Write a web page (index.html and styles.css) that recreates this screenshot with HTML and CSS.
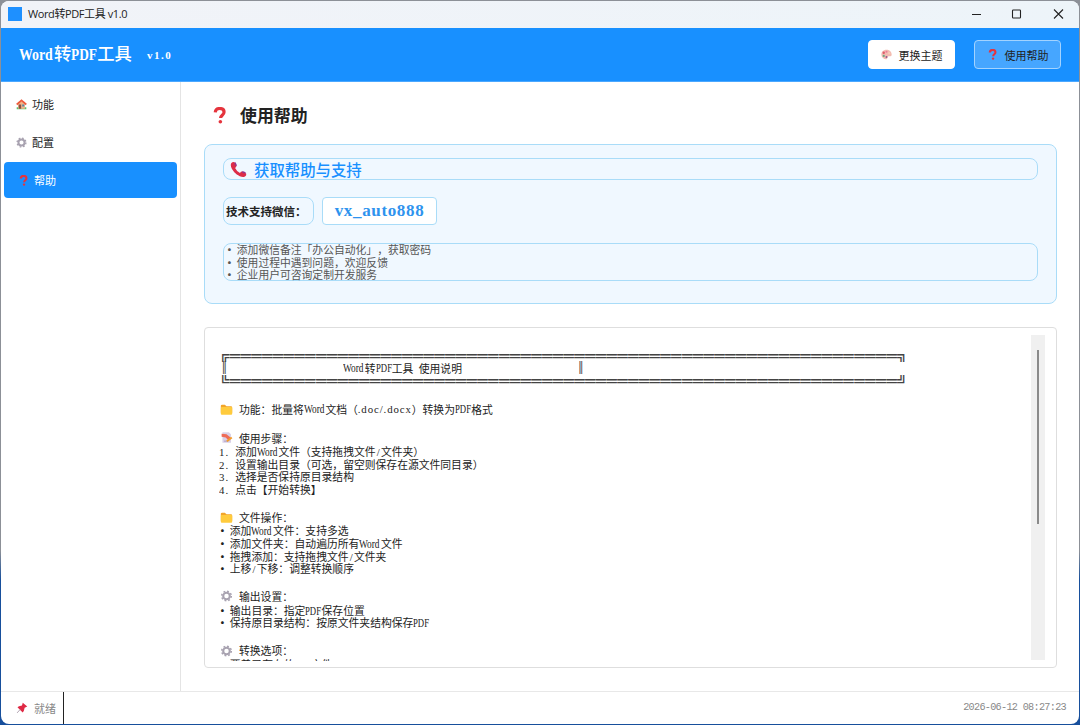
FILE: index.html
```html
<!DOCTYPE html>
<html lang="zh-CN">
<head>
<meta charset="utf-8">
<title>Word转PDF工具 v1.0</title>
<link rel="stylesheet" href="styles.css">
</head>
<body>
<svg class="defs" width="0" height="0">
  <symbol id="question" viewBox="0 0 16 16"><path d="M4 5.100C4.200 2.400 6 1.400 8.200 1.400c2.500 0 4.100 1.300 4.100 3.300 0 3-3.300 3-3.300 5.700" fill="none" stroke="#e5343d" stroke-width="3"/><circle cx="8.800" cy="13.900" r="1.700" fill="#e5343d"/></symbol>
  <symbol id="gear" viewBox="0 0 16 16"><circle cx="8" cy="8" r="6.400" fill="none" stroke="#a8a2b0" stroke-width="2" stroke-dasharray="2.513 2.513"/><circle cx="8" cy="8" r="4.400" fill="none" stroke="#a8a2b0" stroke-width="2.800"/></symbol>
  <symbol id="folder" viewBox="0 0 16 16"><path d="M1 3.500q0-1.500 1.500-1.500H6l2 2h5.500Q15 4 15 5.500V12H1z" fill="#f2a52a"/><rect x="1" y="5" width="14" height="9.500" rx="1.300" fill="#ffcb3d"/></symbol>
  <symbol id="memo" viewBox="0 0 16 16"><path d="M3 1.500h8l2.500 2.500v10.500H3z" fill="#d9d0e6"/><path d="M5 12.500h5" stroke="#a694bd"/><path d="M2 3.500l6 .5 5 4-3 3-3-3-5-1z" fill="#ef6c57"/><path d="M8.500 12.500l6-4.500" stroke="#f49b29" stroke-width="2.400"/></symbol>
  <symbol id="home" viewBox="0 0 16 16"><path d="M1 12h14v3H1z" fill="#59c26c"/><path d="M3 7l5-4 5 4v7H3z" fill="#f0b58a"/><path d="M1 8l7-6 7 6" fill="none" stroke="#ed5a3c" stroke-width="2.400"/><path d="M4 8h3.500v6H4z" fill="#8a4e3f"/><path d="M9 8h3v3H9z" fill="#5588a8"/></symbol>
  <symbol id="phone" viewBox="0 0 16 16"><path d="M2.200 1.100Q4.600.300 5.500 2.500l.6 2q.2 1-1.300 2 1.500 3.200 4.600 4.700 1.200-1.600 2.400-1.100l2.500 1q1.500.8.900 2.300c-1 2-3.400 2.100-6 .9C5.300 12.600 2.100 9 1 5.500.5 3.200.700 1.700 2.200 1.100z" fill="#dc2c48"/><path d="M4.600 1.500l1.300 3M11.500 10.200l3 1.200" stroke="#92368e" stroke-width="1.500"/></symbol>
  <symbol id="palette" viewBox="0 0 16 16"><path d="M8 1C3 1 .3 4.500.5 8.500.8 13 5 15.500 8 15c2-.4.500-3 2-4 2-1.300 5.500 1 5.500-3C15.500 3.500 12 1 8 1z" fill="#f2bbb0"/><circle cx="4" cy="5.500" r="1.700" fill="#e05a6c"/><circle cx="8" cy="4" r="1.500" fill="#ed7b9b"/><circle cx="12" cy="6" r="1.600" fill="#f8cdb8"/><circle cx="4" cy="10" r="1.600" fill="#69a884"/><circle cx="8" cy="11.500" r="1.500" fill="#94588e"/></symbol>
  <symbol id="pin" viewBox="0 0 16 16"><path d="M9 1l6 5-2 1-1.500.5-1 4L9 14 5.500 10.500 2 7l2-1.500 4-1z" fill="#df2945"/><path d="M5.500 10L1.500 14.500" stroke="#a99aa9" stroke-width="1.200"/></symbol>
</svg>
<div class="window">
  <div class="titlebar">
    <i class="app-icon"></i><span class="app-name">Word转PDF工具 v1.0</span>
    <svg class="controls" width="96" height="14" viewBox="0 0 96 14" fill="none" stroke="#222" stroke-width="1.100"><path d="M0 7.500h9"/><rect x="40.500" y="3" width="8" height="8" rx=".8"/><path d="M82 2.500l9 9m0-9l-9 9"/></svg>
  </div>
  <header class="header">
    <h1 class="brand"><span class="brand-word">Word</span>转<span class="brand-pdf">PDF</span>工具</h1><span class="version">v1.0</span>
    <button class="btn"><svg width="11" height="11"><use href="#palette"/></svg>更换主题</button>
    <button class="btn btn-active"><svg width="11" height="11"><use href="#question"/></svg>使用帮助</button>
  </header>
  <div class="body">
    <nav class="sidebar">
      <a class="nav"><svg width="11" height="11"><use href="#home"/></svg>功能</a>
      <a class="nav"><svg width="11" height="11"><use href="#gear"/></svg>配置</a>
      <a class="nav nav-active"><svg width="11" height="11"><use href="#question"/></svg>帮助</a>
    </nav>
    <main class="content">
      <h2 class="page-title"><svg width="17" height="17"><use href="#question"/></svg>使用帮助</h2>
      <section class="support">
        <h3 class="support-title"><svg width="17" height="17"><use href="#phone"/></svg>获取帮助与支持</h3>
        <div class="contact"><span class="contact-label">技术支持微信：</span><span class="contact-id">vx_auto888</span></div>
        <div class="notes"><p><b class="dot">·</b>添加微信备注「办公自动化」，获取密码</p><p><b class="dot">·</b>使用过程中遇到问题，欢迎反馈</p><p><b class="dot">·</b>企业用户可咨询定制开发服务</p></div>
      </section>
      <section class="guide">
        <div class="guide-text">
          <p class="rule">╔══════════════════════════════════════════════════════════════╗</p>
          <p class="banner"><span class="bar">║</span><span class="banner-title"><i class="w">Word</i>转<i class="p">PDF</i>工具<i class="sp"></i>使用说明</span><span class="bar">║</span></p>
          <p class="rule">╚══════════════════════════════════════════════════════════════╝</p>
          <p></p>
          <p class="head"><svg width="13" height="13"><use href="#folder"/></svg>功能：批量将<i class="w">Word</i>文档（<i class="n">.doc/.docx</i>）转换为<i class="p">PDF</i>格式</p>
          <p></p>
          <p class="head"><svg width="13" height="13"><use href="#memo"/></svg>使用步骤：</p>
          <p><i class="num">1.</i>添加<i class="w">Word</i>文件（支持拖拽文件<i class="s">/</i>文件夹）</p>
          <p><i class="num">2.</i>设置输出目录（可选，留空则保存在源文件同目录）</p>
          <p><i class="num">3.</i>选择是否保持原目录结构</p>
          <p><i class="num">4.</i>点击【开始转换】</p>
          <p></p>
          <p class="head"><svg width="13" height="13"><use href="#folder"/></svg>文件操作：</p>
          <p><b class="dot">·</b>添加<i class="w">Word</i>文件：支持多选</p>
          <p><b class="dot">·</b>添加文件夹：自动遍历所有<i class="w">Word</i>文件</p>
          <p><b class="dot">·</b>拖拽添加：支持拖拽文件<i class="s">/</i>文件夹</p>
          <p><b class="dot">·</b>上移<i class="s">/</i>下移：调整转换顺序</p>
          <p></p>
          <p class="head"><svg width="12" height="12"><use href="#gear"/></svg>输出设置：</p>
          <p><b class="dot">·</b>输出目录：指定<i class="p">PDF</i>保存位置</p>
          <p><b class="dot">·</b>保持原目录结构：按原文件夹结构保存<i class="p">PDF</i></p>
          <p></p>
          <p class="head"><svg width="12" height="12"><use href="#gear"/></svg>转换选项：</p>
          <p><b class="dot">·</b>覆盖已存在的<i class="p">PDF</i>文件</p>
        </div>
        <div class="scroll"><i class="thumb"></i></div>
      </section>
    </main>
  </div>
  <footer class="status"><span class="ready"><svg width="12" height="12"><use href="#pin"/></svg>就绪</span><time class="clock">2026-06-12 08:27:23</time></footer>
</div>
</body>
</html>
```
FILE: styles.css
```css
* { box-sizing: border-box; margin: 0; padding: 0; }
body { width: 1080px; height: 725px; overflow: hidden; padding: 1px; background: linear-gradient(#8c9097 0 76%, #174f9c 80%); font-family: "Liberation Sans", "Noto Sans CJK SC", sans-serif; color: #222; text-spacing-trim: space-all; }
svg { flex: none; }
i { font-style: normal; }
.defs { display: none; }
.window { height: 723px; display: flex; flex-direction: column; background: #fff; border-radius: 8px; overflow: hidden; }
.titlebar { flex: none; height: 27px; display: flex; align-items: center; padding: 0 11px 1px 7px; background: linear-gradient(90deg, #f1f3f8, #edf4f9); }
.app-icon { width: 14px; height: 14px; background: #1e90ff; margin-right: 6px; }
.app-name { font: 11px/26px "Open Sans", "Noto Sans CJK SC", sans-serif; letter-spacing: -.4px; }
.controls { margin-left: auto; }
.header { flex: none; height: 54px; display: flex; align-items: center; padding: 0 18px; background: #1890ff; color: #fff; border-bottom: 1px solid #4ba8ff; }
.brand { display: flex; padding-top: 1px; font: 500 17.300px/24px "Liberation Serif", "Noto Sans CJK SC", serif; }
.brand-word, .brand-pdf { font-weight: bold; transform-origin: left center; }
.brand-word { width: 35px; transform: scaleX(.8); }
.brand-pdf { width: 26px; transform: scaleX(.77); }
.version { font: bold 11px/20px "Liberation Serif", serif; letter-spacing: 1.500px; margin-left: 15px; margin-right: auto; }
.btn { width: 87px; height: 29px; display: flex; align-items: center; justify-content: center; gap: 7px; border: 1px solid #fff; border-radius: 4px; background: #fff; font: 11px/16px "Noto Sans CJK SC", sans-serif; color: #222; }
.btn-active { margin-left: 19px; background: #46a6ff; border-color: #a3d3ff; }
.body { flex: 1; min-height: 0; display: flex; }
.sidebar { width: 180px; padding: 4px 3px 0; display: flex; flex-direction: column; gap: 2px; border-right: 1px solid #e4e4e4; }
.nav { height: 36px; display: flex; align-items: center; gap: 5px; padding-left: 12px; border-radius: 4px; font: 11px/16px "Noto Sans CJK SC", sans-serif; }
.nav-active { padding-left: 14px; background: #1890ff; color: #fff; }
.content { flex: 1; padding: 19px 22px 23px 23px; display: flex; flex-direction: column; }
.page-title { height: 28px; margin-bottom: 15px; padding-left: 7px; display: flex; align-items: center; gap: 12px; font: bold 16.900px/28px "Noto Sans CJK SC", sans-serif; }
.support { height: 160px; padding: 13px 18px; border: 1px solid #a9dcf8; border-radius: 8px; background: #f0f8ff; }
.support-title { height: 22px; display: flex; align-items: center; gap: 7px; padding-left: 6px; border: 1px solid #a9dcf8; border-radius: 8px; color: #1890ff; font: 500 15.400px/20px "Noto Sans CJK SC", sans-serif; }
.contact { display: flex; gap: 8px; margin: 17px 0 18px; }
.contact-label { width: 91px; height: 28px; padding-left: 2px; border: 1px solid #a9dcf8; border-radius: 8px; font: bold 11.500px/27px "Noto Sans CJK SC", sans-serif; white-space: nowrap; }
.contact-id { width: 115px; height: 28px; border: 1px solid #a9dcf8; border-radius: 4px; background: #fff; color: #2e93ee; text-align: center; font: bold 17px/25px "Liberation Serif", serif; letter-spacing: .65px; }
.notes { height: 38px; padding-left: 2px; border: 1px solid #a9dcf8; border-radius: 8px; color: #555; font: 10.800px/12.600px "Noto Sans CJK SC", sans-serif; }
.notes p { position: relative; top: -1px; }
.dot { display: inline-block; width: 10.800px; text-indent: -2px; }
.guide { height: 341px; margin-top: 23px; padding: 7px 11px 7px 14px; display: flex; justify-content: space-between; border: 1px solid #dedede; border-radius: 4px; }
.guide-text { width: 780px; height: 326px; padding-top: 14.500px; overflow: hidden; color: #222; font: 10.800px/12.600px "Noto Sans CJK SC", sans-serif; white-space: nowrap; }
.guide-text p { height: 12.600px; }
.guide-text .head { height: 16.300px; display: flex; align-items: center; padding: 2px 0 0 1px; }
.head svg { width: 13px; margin-right: 6px; }
.guide-text .rule { overflow: hidden; font: 17px/12.600px "DejaVu Sans Mono", monospace; letter-spacing: .53px; color: #444; }
.banner { display: flex; }
.bar { width: 10.800px; font: 11px/12.600px "DejaVu Sans Mono", monospace; color: #444; text-indent: 2px; }
.banner-title { display: flex; width: 345.600px; padding-left: 113.400px; }
.w, .p, .n, .s, .num { display: inline-block; font-family: "Liberation Serif", serif; line-height: 12px; }
.w, .p { font-size: 11.800px; transform-origin: left center; }
.w { width: 21.600px; transform: scaleX(.79); }
.p { width: 16.200px; transform: scaleX(.74); }
.n { width: 54px; letter-spacing: .9px; }
.s { width: 5.400px; text-align: center; }
.num { width: 16.200px; letter-spacing: 1px; }
.sp { width: 5.400px; }
.scroll { width: 14px; height: 325px; padding: 15px 0 0 6px; background: #f0f0f0; }
.thumb { display: block; width: 2px; height: 174px; background: #8a8a8a; }
.status { flex: none; height: 33px; display: flex; justify-content: space-between; border-top: 1px solid #e8e8e8; color: #888; }
.ready { width: 63px; display: flex; align-items: center; gap: 6px; padding-left: 15px; border-right: 1px solid #222; font: 11px/16px "Noto Sans CJK SC", sans-serif; }
.clock { padding-right: 13px; font: 10.200px/32px "Liberation Mono", monospace; letter-spacing: -.7px; }
```
